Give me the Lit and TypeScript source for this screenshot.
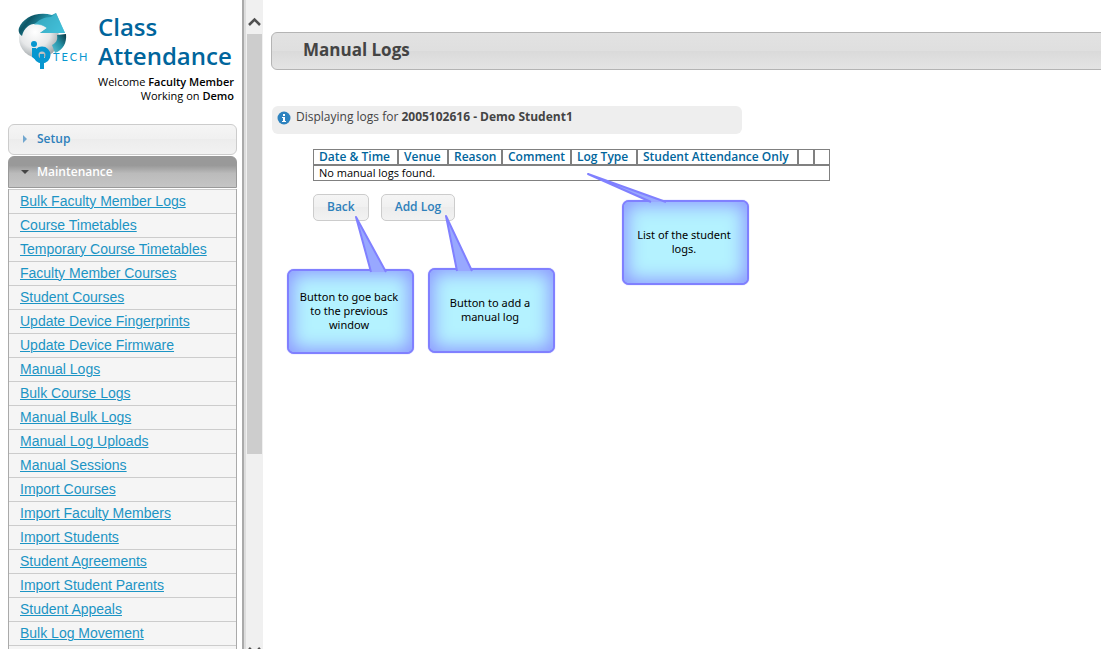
import { LitElement, html, css, svg } from "lit";
import { customElement, property } from "lit/decorators.js";

const MAINTENANCE_LINKS = [
  "Bulk Faculty Member Logs",
  "Course Timetables",
  "Temporary Course Timetables",
  "Faculty Member Courses",
  "Student Courses",
  "Update Device Fingerprints",
  "Update Device Firmware",
  "Manual Logs",
  "Bulk Course Logs",
  "Manual Bulk Logs",
  "Manual Log Uploads",
  "Manual Sessions",
  "Import Courses",
  "Import Faculty Members",
  "Import Students",
  "Student Agreements",
  "Import Student Parents",
  "Student Appeals",
  "Bulk Log Movement",
];

const COLUMNS = [
  { title: "Date & Time", width: 85 },
  { title: "Venue", width: 50 },
  { title: "Reason", width: 54 },
  { title: "Comment", width: 69 },
  { title: "Log Type", width: 66 },
  { title: "Student Attendance Only", width: 161 },
  { title: "", width: 16 },
  { title: "", width: 16 },
];

@customElement("note-callout")
export class NoteCallout extends LitElement {
  /** Corners of the pointer, measured from the top left of the box: base, tip, base. */
  @property({ attribute: false }) tail: number[][] = [];

  static styles = css`
    :host {
      display: block;
      position: absolute;
      width: 127px;
    }
    .box {
      box-sizing: border-box;
      min-height: 85px;
      padding: 0 11px 2px 8px;
      border: 2px solid #8080ff;
      border-radius: 7px;
      background: #b4f2ff;
      box-shadow: inset 0 0 18px 3px #8c96ff, 0 0 1px #8080ff;
      display: flex;
      align-items: center;
      justify-content: center;
      text-align: center;
      font: 11px/14px "Noto Sans", sans-serif;
      color: #000;
    }
    .tail {
      position: absolute;
      left: 0;
      top: 0;
      width: 1px;
      height: 1px;
      overflow: visible;
      pointer-events: none;
    }
  `;

  render() {
    const points = this.tail.map((p) => p.join(",")).join(" ");
    return html`
      <div class="box"><slot></slot></div>
      <svg class="tail" aria-hidden="true">
        ${svg`<polygon points=${points} fill="#98a8ff"/>
        <polyline points=${points} fill="none" stroke="#8080ff" stroke-width="2" stroke-linejoin="round"/>`}
      </svg>
    `;
  }
}

@customElement("app-root")
export class AppRoot extends LitElement {
  static styles = css`
    :host {
      display: flex;
      height: 100vh;
      overflow: hidden;
      background: #fff;
      font-family: "Trebuchet MS", "Open Sans", sans-serif;
      font-size: 12px;
      color: #000;
    }
    .sidebar {
      flex: none;
      box-sizing: border-box;
      width: 242px;
      padding: 12px 5px 0 8px;
      overflow: hidden;
    }
    .brand {
      display: flex;
      justify-content: space-between;
      height: 60px;
      padding: 0 3px 0 8px;
    }
    .logo {
      flex: none;
      width: 76px;
      height: 62px;
    }
    .brand h1 {
      flex: none;
      margin: 0;
      width: 136px;
      font-size: 24px;
      line-height: 29px;
      font-weight: 600;
      color: #00659c;
    }
    .welcome {
      margin: 3px 3px 0 0;
      text-align: right;
      font-size: 11px;
      line-height: 14px;
    }
    .welcome b {
      font-weight: 600;
    }
    .section {
      display: flex;
      align-items: center;
      box-sizing: border-box;
      width: 100%;
      margin: 0;
      padding: 0 12px 1px;
      gap: 8px;
      border: 1px solid #ccc;
      border-radius: 6px;
      background: linear-gradient(#f5f5f5, #f0f0f0 50%, #ececec 50%, #f2f2f2);
      font-family: inherit;
      font-size: 12px;
      line-height: 16px;
      font-weight: 600;
      color: #2e80bb;
      text-align: left;
    }
    .section svg {
      width: 8px;
      height: 8px;
    }
    .setup {
      height: 31px;
      margin-top: 21px;
    }
    .maintenance {
      height: 32px;
      margin: 1px 0;
      border-color: #999;
      border-radius: 6px 6px 0 0;
      background: linear-gradient(#999, #999 28%, #bbb 55%, #c5c5c5);
      color: #fff;
    }
    .links {
      list-style: none;
      margin: 0;
      padding: 0 0 12px;
      border: 1px solid #aaa;
      border-top: 0;
      background: #f5f5f5;
      font-family: "Liberation Sans", Arial, sans-serif;
      font-size: 14px;
      line-height: 23px;
    }
    .links li {
      border-top: 1px solid #ccc;
      padding-left: 11px;
    }
    .links li:last-child {
      border-bottom: 1px solid #ccc;
    }
    .links a {
      color: #1c94c4;
      text-underline-offset: 1px;
      text-decoration-thickness: 1px;
    }
    .divider {
      flex: none;
      width: 4px;
      background: linear-gradient(to right, #aaa 0 2px, #ddd 2px 4px);
    }
    .scrollbar {
      flex: none;
      display: flex;
      flex-direction: column;
      width: 17px;
      background: #f0f0f0;
    }
    .arrow {
      flex: none;
      display: flex;
      align-items: flex-end;
      justify-content: center;
      height: 34px;
      padding: 0;
      border: 0;
      background: none;
    }
    .arrow.down {
      height: 3px;
      margin-top: auto;
      align-items: flex-start;
      overflow: hidden;
    }
    .arrow svg {
      flex: none;
      width: 13px;
      height: 9px;
    }
    .arrow.up svg {
      margin-bottom: 8px;
    }
    .thumb {
      margin: 0 1px;
      height: 420px;
      flex: 0 1 auto;
      background: #cdcdcd;
    }
    main {
      flex: 1;
      min-width: 0;
      position: relative;
      overflow: hidden;
      padding: 32px 0 0 8px;
    }
    .title {
      box-sizing: border-box;
      margin: 0 -10px 0 0;
      padding: 0 31px;
      height: 38px;
      border: 1px solid #b4b4b4;
      border-radius: 6px;
      background: linear-gradient(#e2e2e2, #dfdfdf 50%, #dadada 50%, #e4e4e4);
      font-size: 17px;
      line-height: 33px;
      font-weight: 700;
      color: #444;
    }
    .info {
      display: flex;
      box-sizing: border-box;
      width: 470px;
      height: 28px;
      margin: 36px 0 0 1px;
      padding: 4px 5px;
      gap: 5px;
      border-radius: 6px;
      background: #eee;
      line-height: 14px;
      color: #444;
    }
    .info svg {
      width: 14px;
      height: 14px;
      margin-top: 1px;
    }
    .info p {
      margin: 0;
    }
    .content {
      padding: 15px 0 0 42px;
    }
    table {
      table-layout: fixed;
      width: 517px;
      border-collapse: separate;
      border-spacing: 0;
    }
    th,
    td {
      box-sizing: border-box;
      height: 16px;
      padding: 0 0 0 5px;
      border: 1px solid #808080;
      text-align: left;
      white-space: nowrap;
      line-height: 14px;
    }
    th {
      font-weight: 600;
      color: #00659c;
    }
    td {
      font-size: 11px;
    }
    .buttons {
      display: flex;
      gap: 12px;
      margin-top: 13px;
    }
    .buttons button {
      box-sizing: border-box;
      height: 27px;
      padding: 0 13px 1px;
      border: 1px solid #ccc;
      border-radius: 5px;
      background: linear-gradient(#f5f5f5, #f0f0f0 50%, #ececec 50%, #f2f2f2);
      font: 600 12px/16px "Trebuchet MS", "Open Sans", sans-serif;
      color: #2e80bb;
    }
    .note-back {
      left: 24px;
      top: 269px;
    }
    .note-add {
      left: 165px;
      top: 268px;
    }
    .note-list {
      left: 359px;
      top: 200px;
    }
  `;

  private renderLogo() {
    return html`<svg class="logo" viewBox="0 0 76 62" role="img" aria-label="IP Tech">
      <defs>
        <radialGradient id="ball" cx="40%" cy="35%" r="65%">
          <stop offset="0" stop-color="#fff" />
          <stop offset=".6" stop-color="#e6e8e9" />
          <stop offset="1" stop-color="#a5abae" />
        </radialGradient>
        <linearGradient id="sweep" x1="0" x2="1" y1="0" y2=".4">
          <stop offset="0" stop-color="#3a9fb2" />
          <stop offset=".3" stop-color="#0d5666" />
          <stop offset=".6" stop-color="#2390a6" />
          <stop offset="1" stop-color="#3bbcd8" />
        </linearGradient>
        <linearGradient id="band" x1="0" x2="1" y1="1" y2="0">
          <stop offset="0" stop-color="#5bc4d8" />
          <stop offset=".5" stop-color="#2593a8" />
          <stop offset="1" stop-color="#083642" />
        </linearGradient>
      </defs>
      <circle cx="23" cy="26" r="20" fill="url(#ball)" />
      <path d="M3 16C7 6 20 -1 36 3L40 1L49 21L24 21L31 16C20 8 9 12 6 24C3 22 2 19 3 16Z" fill="url(#sweep)" />
      <path d="M18 13C22 8 28 5 35 5L40 1L49 21L24 21L31 16C27 13 22 12 18 13Z" fill="#45bdd6" opacity=".7" />
      <path d="M41 23L50 22C51 31 47 38 39 41L36 33C40 31 42 28 41 23Z" fill="url(#band)" />
      <circle cx="26" cy="43" r="6" fill="none" stroke="#0797d0" stroke-width="5" />
      <path d="M24 42H28V57H24Z" fill="#0797d0" />
      <path d="M16 36H20V48L16 45Z" fill="#0797d0" />
      <circle cx="18" cy="32" r="3" fill="#0797d0" />
      <text x="37" y="49" font-family="Lato, sans-serif" font-size="11" letter-spacing="2" fill="#0797d0">TECH</text>
    </svg>`;
  }

  render() {
    return html`
      <aside class="sidebar">
        <div class="brand">
          ${this.renderLogo()}
          <h1>Class Attendance</h1>
        </div>
        <div class="welcome">
          Welcome <b>Faculty Member</b><br />Working on <b>Demo</b>
        </div>
        <button class="section setup" aria-expanded="false">
          <svg viewBox="0 0 8 8"><path d="M2 0L6 4L2 8Z" fill="#72a7cf" /></svg>Setup
        </button>
        <button class="section maintenance" aria-expanded="true">
          <svg viewBox="0 0 8 8"><path d="M0 2H8L4 6Z" fill="#454545" /></svg>Maintenance
        </button>
        <ul class="links">
          ${MAINTENANCE_LINKS.map((name) => html`<li><a href="#">${name}</a></li>`)}
        </ul>
      </aside>
      <div class="divider"></div>
      <div class="scrollbar">
        <button class="arrow up" aria-label="Scroll up">
          <svg viewBox="0 0 13 9"><path d="M1 8L6.500 2.500L12 8" fill="none" stroke="#505050" stroke-width="2.500" /></svg>
        </button>
        <div class="thumb"></div>
        <button class="arrow down" aria-label="Scroll down">
          <svg viewBox="0 0 13 9"><path d="M1 2L6.500 7.500L12 2" fill="none" stroke="#505050" stroke-width="2.500" /></svg>
        </button>
      </div>
      <main>
        <div class="title" role="heading" aria-level="2">Manual Logs</div>
        <div class="info">
          <svg viewBox="0 0 14 14" aria-hidden="true">
            <circle cx="7" cy="7" r="6.500" fill="#2e83bf" />
            <path d="M6 3H8V5H6ZM5 6H8V10H9V11H5V10H6V7H5Z" fill="#fff" />
          </svg>
          <p>Displaying logs for <b>2005102616 - Demo Student1</b></p>
        </div>
        <div class="content">
          <table>
            <colgroup>
              ${COLUMNS.map((c) => html`<col style="width:${c.width}px" />`)}
            </colgroup>
            <thead>
              <tr>
                ${COLUMNS.map((c) => html`<th>${c.title}</th>`)}
              </tr>
            </thead>
            <tbody>
              <tr>
                <td colspan="8">No manual logs found.</td>
              </tr>
            </tbody>
          </table>
          <div class="buttons">
            <button>Back</button>
            <button>Add Log</button>
          </div>
        </div>
        <note-callout class="note-back" .tail=${[[84, 3], [69, -52], [99, 3]]}>
          Button to goe back to the previous window
        </note-callout>
        <note-callout class="note-add" .tail=${[[29, 3], [18, -52], [44, 3]]}>
          Button to add a manual log
        </note-callout>
        <note-callout class="note-list" .tail=${[[29, 2], [-34, -26], [44, 2]]}>
          List of the student logs.
        </note-callout>
      </main>
    `;
  }
}
